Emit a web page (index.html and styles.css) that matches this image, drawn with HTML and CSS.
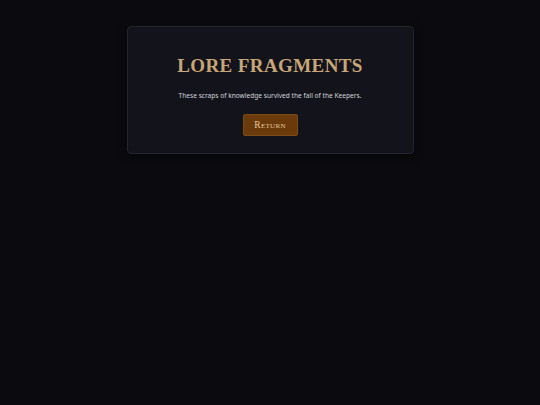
FILE: index.html
```html
<!DOCTYPE html>
<html>
<head>
<meta charset="utf-8">
<link rel="stylesheet" href="styles.css">
</head>
<body>
<main class="page">
  <section class="card">
    <h1 class="title">Lore Fragments</h1>
    <p class="subtitle">These scraps of knowledge survived the fall of the Keepers.</p>
    <button class="btn">Return</button>
  </section>
</main>
</body>
</html>
```
FILE: styles.css
```css
html, body {
  margin: 0;
  padding: 0;
  background: #0b0b0f;
  height: 100%;
}
.page {
  padding-top: 26px;
  display: flex;
  justify-content: center;
}
.card {
  box-sizing: border-box;
  width: 287px;
  height: 128px;
  background: #13141b;
  border: 1px solid #24252d;
  border-radius: 4px;
  box-shadow: 0 2px 8px rgba(0,0,0,0.5);
  display: flex;
  flex-direction: column;
  align-items: center;
  padding-top: 28px;
}
.title {
  margin: 0;
  font-family: "Liberation Serif", serif;
  font-weight: bold;
  font-size: 19px;
  line-height: 22px;
  letter-spacing: 0.4px;
  text-transform: uppercase;
  color: #c8a677;
}
.subtitle {
  margin: 14px 0 0;
  font-family: "Noto Sans", sans-serif;
  font-size: 6.6px;
  line-height: 9px;
  color: #d0d1d8;
}
.btn {
  margin-top: 14px;
  width: 55px;
  height: 22px;
  background: #6a3a0b;
  border: 1px solid #7d4b16;
  border-radius: 2px;
  color: #e6c89c;
  font-family: "Liberation Serif", serif;
  font-size: 9.5px;
  font-variant: small-caps;
  letter-spacing: 0.3px;
  padding: 0;
}
```
